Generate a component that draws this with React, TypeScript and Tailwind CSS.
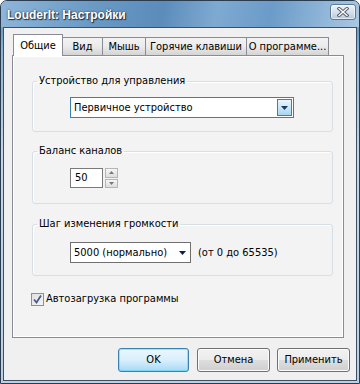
import React from "react";

const F = "font-['DejaVu_Sans_Condensed','DejaVu_Sans','Liberation_Sans',sans-serif]";
const T = "text-[11px] leading-[14px]";

function Tab({ label, w, selected }: { label: string; w: number; selected?: boolean }) {
  if (selected) {
    return (
      <div
        className={"relative z-10 -mb-[1px] flex h-[22px] items-start justify-center whitespace-nowrap border border-b-0 border-[#898c95] bg-white pt-[4px] text-black " + T}
        style={{ width: w }}
      >
        {label}
      </div>
    );
  }
  return (
    <div
      className={"-ml-[1px] flex h-[18px] shrink-0 items-start justify-center whitespace-nowrap border border-b-0 border-[#898c95] bg-gradient-to-b from-[#f3f3f3] via-[#ebebeb] to-[#d4d4d4] pt-[2px] text-black " + T}
      style={{ width: w }}
    >
      {label}
    </div>
  );
}

function Group({ title, children, className }: { title: string; children: React.ReactNode; className?: string }) {
  return (
    <fieldset
      className={
        "w-[301px] rounded-[3px] border border-[#d5dfe5] shadow-[inset_1px_1px_0_#ffffff] " + (className ?? "")
      }
    >
      <legend className={"ml-[4px] px-[2px] text-black " + T}>{title}</legend>
      {children}
    </fieldset>
  );
}

function VistaButton({ label, w, isDefault, className }: { label: string; w: number; isDefault?: boolean; className?: string }) {
  return (
    <div
      className={
        "flex h-[24px] items-center justify-center rounded-[3px] border text-black " + T + " " +
        (isDefault
          ? "border-[#3c7fb1] bg-gradient-to-b from-[#eaf6fd] via-[#d9f0fc] to-[#a7d9f5] shadow-[inset_0_0_0_1px_#48d0fe80] "
          : "border-[#707070] bg-[linear-gradient(to_bottom,#f2f2f2_0%,#ebebeb_50%,#dddddd_51%,#cfcfcf_100%)] shadow-[inset_0_0_0_1px_#fcfcfc] ") +
        (className ?? "")
      }
      style={{ width: w }}
    >
      {label}
    </div>
  );
}

export default function App() {
  return (
    <div className={"h-[384px] w-[360px] bg-white " + F}>
      <div className="flex h-[384px] w-[360px] flex-col rounded-t-[7px] border border-[#2b3c4e] bg-[linear-gradient(to_bottom,#b7cfe6_0%,#8db5d8_4%,#6f9ec8_8%,#86b1d6_12%,#c4d6e6_40%,#bcd0e2_100%)]">
        {/* Title bar */}
        <div className="flex h-[26px] shrink-0 items-start justify-between rounded-t-[6px] bg-[linear-gradient(100deg,#8fb6d9_0%,#6b9ac5_25%,#5b8cba_45%,#7eaad2_60%,#6b9bc8_75%,#a9c8e3_100%)] pl-[6px] pr-[3px] pt-[3px]">
          <div className="mt-[4px] font-['Liberation_Sans',Arial,sans-serif] text-[12px] font-bold leading-[14px] text-white [text-shadow:0_0_2px_#1d2f44,1px_1px_1px_#1d2f44]">
            LouderIt: Настройки
          </div>
          <div className="flex h-[16px] w-[26px] items-center justify-center rounded-[3px] border border-[#5f7a95] bg-gradient-to-b from-[#eef3f8] via-[#d6e1ec] to-[#b8c9da] shadow-[inset_0_0_0_1px_#ffffff99]">
            <svg width="12" height="10" viewBox="0 0 12 10">
              <path d="M2 1.5 L10 8.5 M10 1.5 L2 8.5" stroke="#505c68" strokeWidth="3.2" strokeLinecap="square" />
              <path d="M2 1.5 L10 8.5 M10 1.5 L2 8.5" stroke="#ffffff" strokeWidth="1.4" strokeLinecap="square" />
            </svg>
          </div>
        </div>
        {/* Client */}
        <div className="mx-[2px] mb-[2px] flex flex-1 flex-col border border-[#3d5063] bg-[#f0f0f0] pl-[8px] pt-[6px]">
          <div className="flex h-[21px] items-end pl-[1px]">
            <Tab label="Общие" w={50} selected />
            <Tab label="Вид" w={41} />
            <Tab label="Мышь" w={44} />
            <Tab label="Горячие клавиши" w={102} />
            <Tab label="О программе..." w={83} />
          </div>
          <div className="flex h-[283px] w-[332px] flex-col border border-[#898c95] bg-[#f3f3f3] pl-[19px] pt-[18px] shadow-[inset_1px_1px_0_#ffffff,inset_-1px_-1px_0_#ffffff]">
            <Group title="Устройство для управления">
              <div className="mb-[13px] ml-[37px] mt-[9px] flex h-[21px] w-[224px] items-center border border-[#3c7fb1] bg-white pl-[3px]">
                <span className={"flex-1 text-black " + T}>Первичное устройство</span>
                <div className="mr-[1px] flex h-[17px] w-[15px] items-center justify-center border border-[#3c7fb1] bg-gradient-to-b from-[#eaf6fd] to-[#a8d6f2]">
                  <svg width="7" height="4" viewBox="0 0 7 4">
                    <path d="M0 0 H7 L3.5 4 Z" fill="#1e395b" />
                  </svg>
                </div>
              </div>
            </Group>
            <Group title="Баланс каналов" className="mt-[12px]">
              <div className="mb-[15px] ml-[37px] mt-[10px] flex items-center gap-[2px]">
                <div className={"flex h-[20px] w-[33px] items-center border border-[#7a7a7a] bg-white pl-[4px] text-black " + T}>
                  50
                </div>
                <div className="flex h-[20px] w-[13px] flex-col gap-[1px]">
                  <div className="flex flex-1 items-center justify-center border border-[#b5b5b5] bg-gradient-to-b from-[#f6f6f6] to-[#dedede]">
                    <svg width="5" height="3" viewBox="0 0 5 3">
                      <path d="M0 3 H5 L2.5 0 Z" fill="#6d7a88" />
                    </svg>
                  </div>
                  <div className="flex flex-1 items-center justify-center border border-[#b5b5b5] bg-gradient-to-b from-[#f6f6f6] to-[#dedede]">
                    <svg width="5" height="3" viewBox="0 0 5 3">
                      <path d="M0 0 H5 L2.5 3 Z" fill="#6d7a88" />
                    </svg>
                  </div>
                </div>
              </div>
            </Group>
            <Group title="Шаг изменения громкости" className="mt-[13px]">
              <div className="mb-[12px] ml-[37px] mt-[11px] flex items-center">
                <div className="flex h-[21px] w-[121px] items-center border border-[#707070] bg-white pl-[3px] pr-[4px]">
                  <span className={"flex-1 text-black " + T}>5000 (нормально)</span>
                  <svg width="7" height="4" viewBox="0 0 7 4">
                    <path d="M0 0 H7 L3.5 4 Z" fill="#0f1f4d" />
                  </svg>
                </div>
                <span className={"ml-[7px] text-black " + T}>(от 0 до 65535)</span>
              </div>
            </Group>
            <div className="-ml-[1px] mt-[16px] flex items-center gap-[2px]">
              <div className="flex h-[13px] w-[13px] items-center justify-center border border-[#8f8f8f] bg-gradient-to-br from-[#e0e0e0] to-[#f5f5f5]">
                <svg width="9" height="9" viewBox="0 0 9 9">
                  <path d="M1 4.5 L3.5 7.5 L8 0.5" stroke="#4a5a8a" strokeWidth="1.8" fill="none" />
                </svg>
              </div>
              <span className={"text-black " + T}>Автозагрузка программы</span>
            </div>
          </div>
          <div className="mt-[10px] flex pl-[106px]">
            <VistaButton label="OK" w={71} isDefault />
            <VistaButton label="Отмена" w={73} className="ml-[8px]" />
            <VistaButton label="Применить" w={73} className="ml-[7px]" />
          </div>
        </div>
      </div>
    </div>
  );
}
